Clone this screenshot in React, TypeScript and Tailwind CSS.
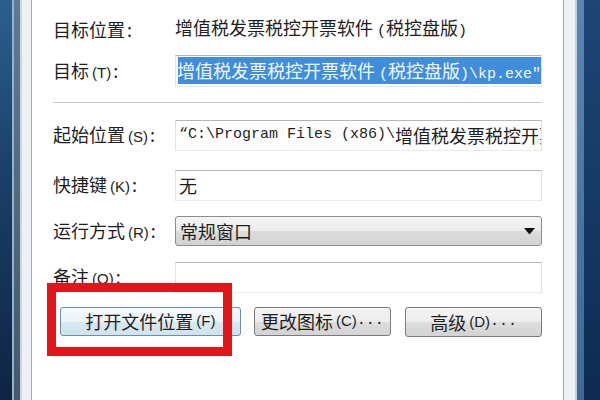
import React from "react";

const cjk = "font-['Noto_Sans_CJK_SC',sans-serif]";
const mono = "font-['Liberation_Mono','Noto_Sans_CJK_SC',monospace] text-[15px]";
const sans = "font-['Liberation_Sans',sans-serif] text-[15px]";

function Label({ cn, key2 }: { cn: string; key2?: string }) {
  return (
    <div className={`w-[122px] shrink-0 text-[18px] leading-[24px] text-[#1e1e1e] ${cjk}`}>
      {cn}
      {key2 ? <span className={`${sans} ml-[3px]`}>{key2}</span> : null}
      <span className="ml-[2px]">:</span>
    </div>
  );
}

function Input({ children, h = "h-[31px]" }: { children?: React.ReactNode; h?: string }) {
  return (
    <div
      className={`flex-1 min-w-0 ${h} border border-t-[#b4b6ba] border-x-[#e0e2e6] border-b-[#e6e9ee] bg-white flex items-center px-[3px] overflow-hidden text-[18px] text-[#1e1e1e] whitespace-nowrap ${cjk}`}
    >
      {children}
    </div>
  );
}

export default function App() {
  return (
    <div className="relative w-[600px] h-[400px] overflow-hidden flex bg-white">
      {/* left desktop / frame */}
      <div className="w-[12px] shrink-0 bg-[linear-gradient(180deg,#2c5f8f_0%,#1a3f66_45%,#0f2443_100%)]" />
      <div className="w-[2px] shrink-0 bg-[#93b2cc]" />
      <div className="w-[6px] shrink-0 bg-[linear-gradient(180deg,#5e7a94,#46586b)]" />
      <div className="w-[2px] shrink-0 bg-[#cdd6de]" />
      <div className="w-[9px] shrink-0 bg-[#eef1f4]" />
      <div className="w-[1px] shrink-0 bg-[#a6a8ab]" />

      {/* dialog content */}
      <div className="w-[531px] min-w-0 shrink-0 bg-white flex flex-col pl-[21px] pr-[21px] pt-[17px]">
        {/* row 1 */}
        <div className="flex items-center h-[24px]">
          <Label cn="目标位置" />
          <div className={`text-[18px] leading-[24px] text-[#1e1e1e] whitespace-nowrap ${cjk}`}>
            增值税发票税控开票软件<span className={`${mono} ml-[4px]`}>(</span>税控盘版<span className={mono}>)</span>
          </div>
        </div>

        {/* row 2 target */}
        <div className="flex items-center mt-[14px]">
          <Label cn="目标" key2="(T)" />
          <div className="flex-1 min-w-0 h-[32px] border border-t-[#b4b6ba] border-x-[#e0e2e6] border-b-[#e6e9ee] bg-white pl-[2px] pr-0 pt-[1px] pb-[2px]">
            <div className="w-full h-full min-w-0 overflow-hidden flex justify-end">
              <span
                className={`shrink-0 whitespace-nowrap bg-[#3f8ddb] text-[#f4f8ff] text-[18px] leading-[27px] ${cjk}`}
              >
                <span className={mono}>"C:\Program Files (x86)\</span>增值税发票税控开票软件
                <span className={`${mono} ml-[4px]`}>(</span>税控盘版<span className={mono}>)\kp.exe"</span>
              </span>
            </div>
          </div>
        </div>

        {/* separator */}
        <div className="mt-[15px] h-[1px] bg-[#c9cacc]" />
        <div className="h-[1px] bg-white" />

        {/* row 3 start location */}
        <div className="flex items-center mt-[16px]">
          <Label cn="起始位置" key2="(S)" />
          <Input>
            <span className={mono}>“C:\Program Files (x86)\</span>增值税发票税控开票软件
            <span className={mono}>(</span>税控盘版<span className={mono}>)"</span>
          </Input>
        </div>

        {/* row 4 shortcut */}
        <div className="flex items-center mt-[19px]">
          <Label cn="快捷键" key2="(K)" />
          <Input h="h-[31px]">无</Input>
        </div>

        {/* row 5 run mode */}
        <div className="flex items-center mt-[15px]">
          <Label cn="运行方式" key2="(R)" />
          <div
            className={`flex-1 min-w-0 h-[30px] rounded-[3px] border border-[#8c8c8c] bg-[linear-gradient(180deg,#f5f5f5_0%,#ebebeb_50%,#dcdcdc_51%,#d2d2d2_100%)] flex items-center pl-[4px] pr-[6px] text-[18px] text-[#1e1e1e] ${cjk}`}
          >
            <span className="flex-1">常规窗口</span>
            <svg width="11" height="7" viewBox="0 0 11 7">
              <path d="M0 0 L11 0 L5.5 6.5 Z" fill="#111" />
            </svg>
          </div>
        </div>

        {/* row 6 remarks */}
        <div className="flex items-center mt-[16px]">
          <Label cn="备注" key2="(O)" />
          <Input h="h-[31px]" />
        </div>

        {/* buttons */}
        <div className="flex mt-[14px] pl-[7px] pr-0">
          <div
            className={`w-[181px] h-[29px] rounded-[3px] border border-[#6f8ea6] bg-[linear-gradient(180deg,#f6fafd_0%,#eaf3f9_50%,#dae8f2_51%,#d0e2ee_100%)] flex items-center justify-center text-[18px] text-[#1e1e1e] ${cjk}`}
          >
            打开文件位置<span className={`${sans} ml-[3px]`}>(F)</span>
          </div>
          <div
            className={`ml-[13px] w-[138px] h-[29px] rounded-[3px] border border-[#7a7a7a] bg-[linear-gradient(180deg,#f4f4f4_0%,#ececec_50%,#dedede_51%,#d3d3d3_100%)] flex items-center justify-center text-[18px] text-[#1e1e1e] whitespace-nowrap ${cjk}`}
          >
            更改图标<span className={`${sans} ml-[3px]`}>(C)</span>
            <span className={mono}>...</span>
          </div>
          <div
            className={`ml-[14px] w-[137px] h-[30px] rounded-[3px] border border-[#7a7a7a] bg-[linear-gradient(180deg,#f4f4f4_0%,#ececec_50%,#dedede_51%,#d3d3d3_100%)] flex items-center justify-center text-[18px] text-[#1e1e1e] whitespace-nowrap ${cjk}`}
          >
            高级<span className={`${sans} ml-[3px]`}>(D)</span>
            <span className={mono}>...</span>
          </div>
        </div>
      </div>

      {/* right frame */}
      <div className="w-[1px] shrink-0 bg-[#a6a8ab]" />
      <div className="w-[11px] shrink-0 bg-[#eef1f4]" />
      <div className="w-[2px] shrink-0 bg-[#bcd0e2]" />
      <div className="w-[7px] shrink-0 bg-[linear-gradient(180deg,#5a86b2,#3e6896)]" />
      <div className="flex-1 bg-[linear-gradient(180deg,#1d4674_0%,#163a66_50%,#0e2a50_100%)]" />

      {/* red annotation box */}
      <div className="absolute left-[47px] top-[283px] w-[185px] h-[73px] border-[9px] border-[#e3141a]" />
    </div>
  );
}
